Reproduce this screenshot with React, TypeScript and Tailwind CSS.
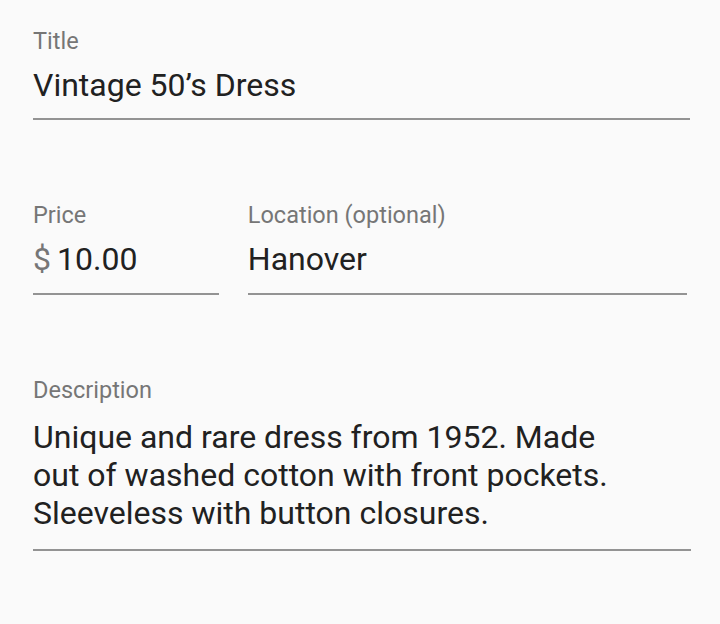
export default function App() {
  return (
    <div className="min-h-screen bg-[#fafafa] px-[33px] pt-[28px] font-['Roboto',sans-serif]">
      {/* Title */}
      <div className="w-[657px] border-b-2 border-[#939393] pb-[14px]">
        <p className="text-[23.5px] leading-[26px] text-[#767676]">Title</p>
        <p className="mt-[12px] text-[32px] leading-[38px] text-[#212121]">Vintage 50’s Dress</p>
      </div>

      {/* Price + Location */}
      <div className="mt-[82px] flex gap-[29px]">
        <div className="w-[187px] border-b-2 border-[#939393] pb-[15px]">
          <p className="text-[23.5px] leading-[26px] text-[#767676]">Price</p>
          <p className="mt-[12px] text-[32px] leading-[38px] text-[#212121]">
            <span className="text-[#767676]">$</span>
            <span className="ml-[6px]">10.00</span>
          </p>
        </div>
        <div className="w-[442px] border-b-2 border-[#939393] pb-[15px]">
          <p className="text-[23.5px] leading-[26px] text-[#767676]">Location (optional)</p>
          <p className="mt-[12px] text-[32px] leading-[38px] text-[#212121]">Hanover</p>
        </div>
      </div>

      {/* Description */}
      <div className="mt-[82px] w-[658px] border-b-2 border-[#939393] pb-[17px]">
        <p className="text-[23.5px] leading-[26px] text-[#767676]">Description</p>
        <p className="mt-[15px] text-[32px] leading-[38px] text-[#212121]">
          Unique and rare dress from 1952. Made
          <br />
          out of washed cotton with front pockets.
          <br />
          Sleeveless with button closures.
        </p>
      </div>
    </div>
  );
}
